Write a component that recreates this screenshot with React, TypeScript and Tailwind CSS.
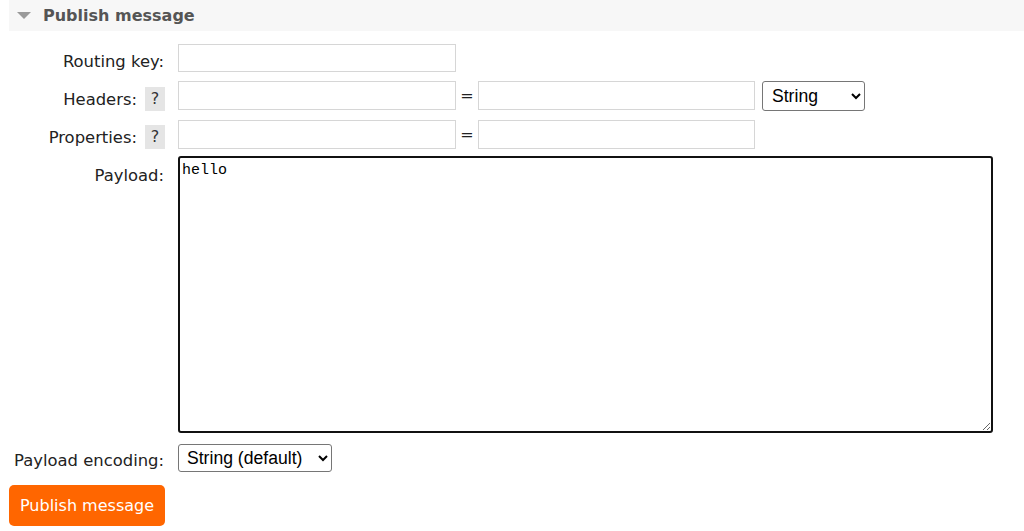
export default function App() {
  const font = "font-['DejaVu_Sans',Verdana,sans-serif]"

  return (
    <div className={`min-h-[531px] bg-white text-[16px] text-[#222] ${font}`}>
      <div className="pl-[9px]">
        {/* Section header */}
        <div className="flex h-[31px] items-center bg-[#f7f7f7] pl-[8px]">
          <svg width="14" height="8" viewBox="0 0 14 8" className="mt-[1px]">
            <polygon points="0,0 14,0 7,7" fill="#9a9a9a" />
          </svg>
          <span className="ml-[12px] font-bold text-[#555]">Publish message</span>
        </div>

        {/* Routing key */}
        <div className="mt-[13px] flex items-start">
          <div className="w-[155px] pt-[8px] text-right text-[16.4px] leading-[19px]">Routing key:</div>
          <input className="ml-[14px] h-[28px] w-[278px] border border-[#d6d6d6] bg-white" />
        </div>

        {/* Headers */}
        <div className="mt-[9px] flex items-start">
          <div className="flex w-[156px] items-center justify-end pt-[6px]">
            <span className="text-[16.4px] leading-[19px]">Headers:</span>
            <span className="ml-[8px] flex h-[24px] w-[20px] items-center justify-center bg-[#e5e5e5] text-[#333]">?</span>
          </div>
          <input className="ml-[13px] h-[29px] w-[278px] border border-[#d6d6d6] bg-white" />
          <span className="w-[22px] pt-[5px] text-center leading-[19px]">=</span>
          <input className="h-[29px] w-[277px] border border-[#d6d6d6] bg-white" />
          <select className="ml-[7px] h-[30px] w-[103px] rounded-[3px] border border-[#767676] bg-white pl-[5px] font-['Liberation_Sans',Arial,sans-serif] text-[17.6px] text-black">
            <option>String</option>
            <option>Number</option>
            <option>Boolean</option>
          </select>
        </div>

        {/* Properties */}
        <div className="mt-[9px] flex items-start">
          <div className="flex w-[156px] items-center justify-end pt-[5px]">
            <span className="text-[16.4px] leading-[19px]">Properties:</span>
            <span className="ml-[8px] flex h-[24px] w-[20px] items-center justify-center bg-[#e5e5e5] text-[#333]">?</span>
          </div>
          <input className="ml-[13px] h-[29px] w-[278px] border border-[#d6d6d6] bg-white" />
          <span className="w-[22px] pt-[5px] text-center leading-[19px]">=</span>
          <input className="h-[29px] w-[277px] border border-[#d6d6d6] bg-white" />
        </div>

        {/* Payload */}
        <div className="mt-[7px] flex items-start">
          <div className="w-[155px] pt-[10px] text-right text-[16.4px] leading-[19px]">Payload:</div>
          <textarea
            defaultValue="hello"
            className="ml-[14px] h-[277px] w-[815px] rounded-[3px] border-2 border-[#111] bg-white px-[2px] pt-[4px] font-['Liberation_Mono','Courier_New',monospace] text-[15px] leading-[18px] text-black outline-none"
          />
        </div>

        {/* Payload encoding */}
        <div className="mt-[11px] flex items-start">
          <div className="w-[155px] pt-[7px] text-right text-[16.4px] leading-[19px]">Payload encoding:</div>
          <select className="ml-[14px] h-[28px] w-[154px] rounded-[3px] border border-[#767676] bg-white pl-[4px] font-['Liberation_Sans',Arial,sans-serif] text-[17.6px] text-black">
            <option>String (default)</option>
            <option>Base64</option>
          </select>
        </div>

        <button className="mt-[13px] h-[41px] rounded-[5px] bg-[#ff6600] px-[11px] text-white">
          Publish message
        </button>
      </div>
    </div>
  )
}
